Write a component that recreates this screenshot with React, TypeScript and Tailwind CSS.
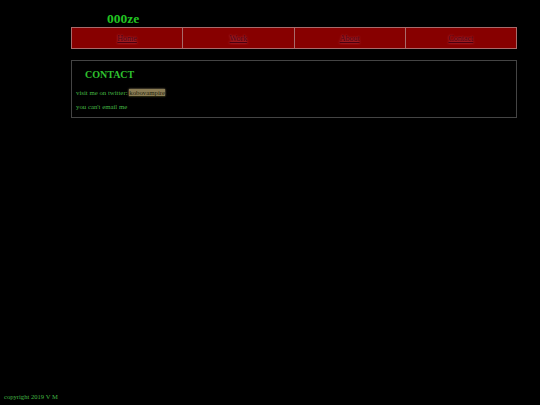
export default function App() {
  const links = ['Home', 'Work', 'About', 'Contact'];
  return (
    <div className="relative h-[405px] w-[540px] bg-black font-['Liberation_Serif',serif]">
      <div className="ml-[71px] w-[446px] pt-[11px]">
        <div className="pl-[36px] text-[13.5px] font-bold leading-[16px] text-[#22c422]">000ze</div>
        <nav className="flex h-[22px] border border-[#a86a6a] bg-[#870000]">
          {links.map((l, i) => (
            <a
              key={l}
              href="#"
              className={`flex flex-1 items-center justify-center pt-[2px] text-[8px] text-[#4a0010] underline [text-shadow:0_0_2px_#d05060] ${i > 0 ? 'border-l border-[#a86a6a]' : ''}`}
            >
              {l}
            </a>
          ))}
        </nav>
        <div className="mt-[11px] h-[58px] border border-[#444] px-[4px] pt-[8px]">
          <div className="pl-[9px] text-[10px] font-bold leading-[12px] text-[#2fc02f]">CONTACT</div>
          <p className="mt-[7px] text-[6.8px] leading-[9px] text-[#44b644]">
            visit me on twitter:{' '}
            <span className="bg-[#8b7d55] text-[#22220c] underline [box-shadow:0_0_2px_#c8b480]">kobovampire</span>
          </p>
          <p className="mt-[5px] text-[6.8px] leading-[9px] text-[#44b644]">you can't email me</p>
        </div>
      </div>
      <div className="absolute bottom-[4px] left-[4px] text-[6.6px] leading-[9px] text-[#44b644]">copyright 2019 V M</div>
    </div>
  );
}
